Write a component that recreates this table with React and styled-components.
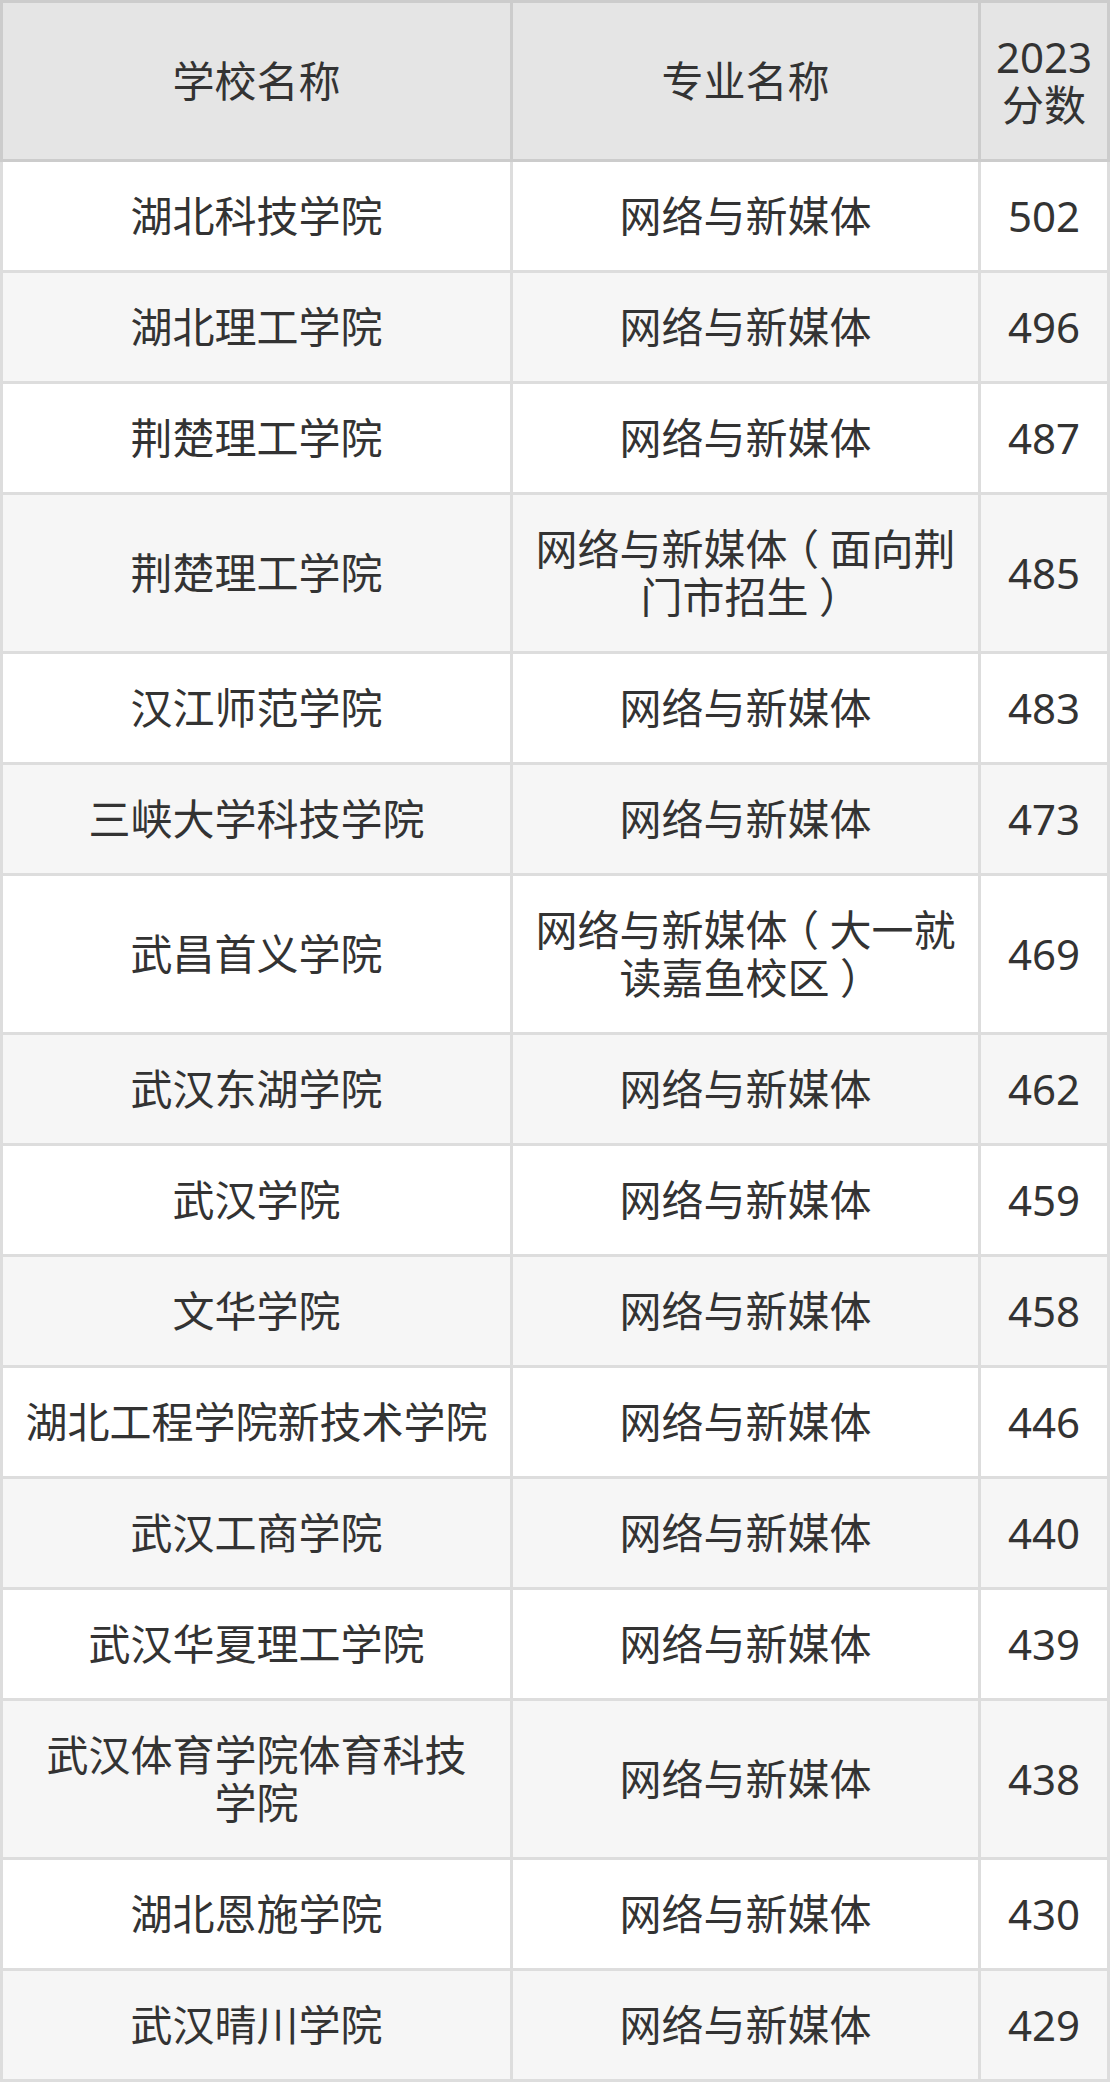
import styled, { createGlobalStyle } from "styled-components";

const rows = [
  { school: "湖北科技学院", major: "网络与新媒体", score: 502 },
  { school: "湖北理工学院", major: "网络与新媒体", score: 496 },
  { school: "荆楚理工学院", major: "网络与新媒体", score: 487 },
  { school: "荆楚理工学院", major: "网络与新媒体（面向荆\n门市招生）", score: 485 },
  { school: "汉江师范学院", major: "网络与新媒体", score: 483 },
  { school: "三峡大学科技学院", major: "网络与新媒体", score: 473 },
  { school: "武昌首义学院", major: "网络与新媒体（大一就\n读嘉鱼校区）", score: 469 },
  { school: "武汉东湖学院", major: "网络与新媒体", score: 462 },
  { school: "武汉学院", major: "网络与新媒体", score: 459 },
  { school: "文华学院", major: "网络与新媒体", score: 458 },
  { school: "湖北工程学院新技术学院", major: "网络与新媒体", score: 446 },
  { school: "武汉工商学院", major: "网络与新媒体", score: 440 },
  { school: "武汉华夏理工学院", major: "网络与新媒体", score: 439 },
  { school: "武汉体育学院体育科技\n学院", major: "网络与新媒体", score: 438 },
  { school: "湖北恩施学院", major: "网络与新媒体", score: 430 },
  { school: "武汉晴川学院", major: "网络与新媒体", score: 429 },
];

// fullwidth brackets sit centred in their em box in the screenshot
const withParens = (text) =>
  text.split(/([（）])/).map((part, i) =>
    part === "（" || part === "）" ? <Paren key={i}>{part}</Paren> : part
  );

const App = () => {
  return (
    <>
      <GlobalStyle />
      <Table>
        <colgroup>
          <Col $width={513} />
          <Col $width={468} />
          <Col $width={129} />
        </colgroup>
        <thead>
          <tr>
            <HeadCell>学校名称</HeadCell>
            <HeadCell>专业名称</HeadCell>
            <HeadCell>{"2023\n分数"}</HeadCell>
          </tr>
        </thead>
        <tbody>
          {rows.map((row, i) => (
            <Row key={i} $striped={i % 2 === 1}>
              <Cell>{row.school}</Cell>
              <Cell>{withParens(row.major)}</Cell>
              <Cell>{row.score}</Cell>
            </Row>
          ))}
        </tbody>
      </Table>
    </>
  );
};

export default App;

const GlobalStyle = createGlobalStyle`
  body {
    margin: 0;
    background: #ffffff;
  }
`;

const Table = styled.table`
  width: 1110px;
  table-layout: fixed;
  border-collapse: separate;
  border-spacing: 0;
  font-family: "Noto Sans", "Noto Sans CJK SC", sans-serif;
  font-size: 42px;
  line-height: 48px;
  color: #333333;
`;

const Col = styled.col`
  width: ${({ $width }) => $width}px;
`;

const HeadCell = styled.th`
  box-sizing: border-box;
  padding: 30px 0;
  font-weight: normal;
  text-align: center;
  vertical-align: middle;
  white-space: pre-line;
  background: #e5e5e5;
  border-top: 3px solid #cccccc;
  border-right: 3px solid #cccccc;
  border-bottom: 3px solid #cccccc;

  &:first-child {
    border-left: 3px solid #cccccc;
  }
`;

const Row = styled.tr`
  background: ${({ $striped }) => ($striped ? "#f6f6f6" : "#ffffff")};
`;

const Cell = styled.td`
  box-sizing: border-box;
  padding: 30px 0;
  text-align: center;
  vertical-align: middle;
  white-space: pre-line;
  border-right: 3px solid #dddddd;
  border-bottom: 3px solid #dddddd;

  &:first-child {
    border-left: 3px solid #dddddd;
  }
`;

const Paren = styled.span`
  font-feature-settings: "halt";
  margin: 0 0.25em;
`;
